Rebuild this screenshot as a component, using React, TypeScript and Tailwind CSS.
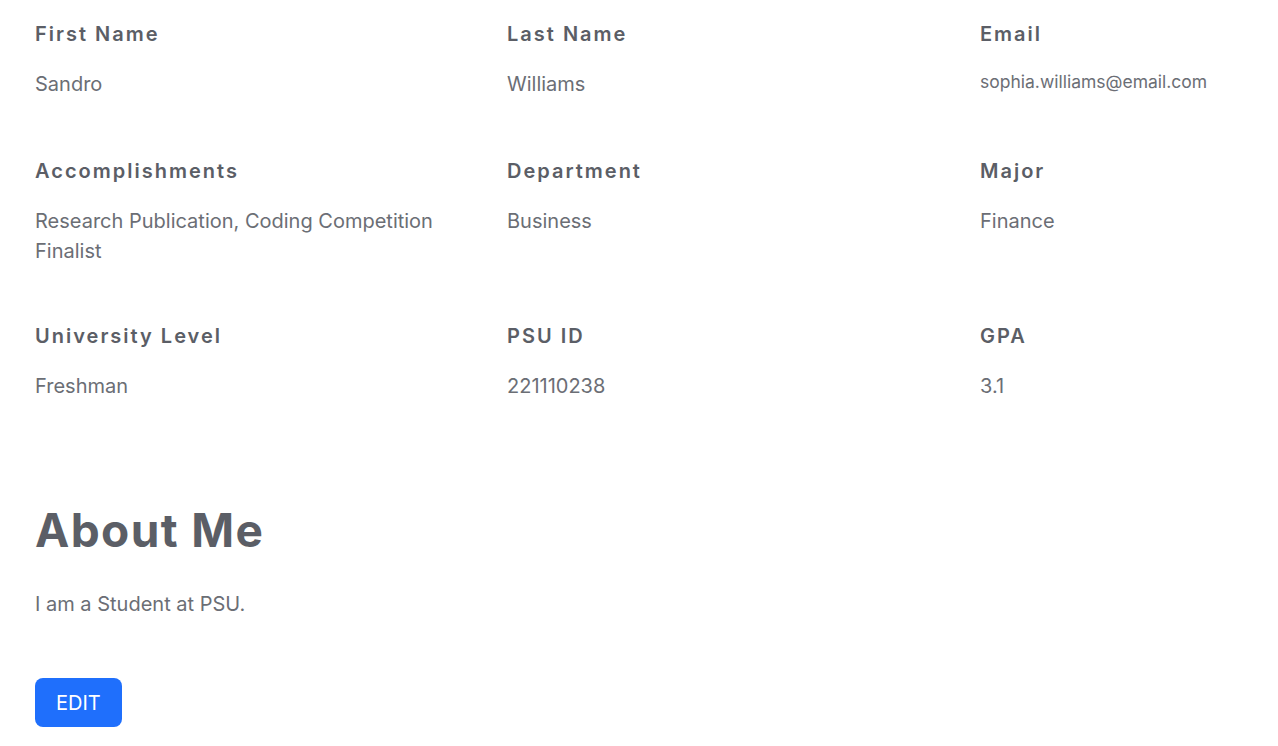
import React from 'react'

const fields = [
  { label: 'First Name', value: 'Sandro' },
  { label: 'Last Name', value: 'Williams' },
  { label: 'Email', value: 'sophia.williams@email.com', small: true },
  { label: 'Accomplishments', value: 'Research Publication, Coding Competition Finalist' },
  { label: 'Department', value: 'Business' },
  { label: 'Major', value: 'Finance' },
  { label: 'University Level', value: 'Freshman' },
  { label: 'PSU ID', value: '221110238' },
  { label: 'GPA', value: '3.1' },
]

export default function App() {
  return (
    <div className="min-h-screen bg-white font-['Inter',sans-serif] text-[#5f6269]">
      <div className="px-[35px] pt-[20px]">
        {/* Profile details */}
        <div className="grid grid-cols-[472px_473px_1fr] gap-y-[56px]">
          {fields.map((f, i) => (
            <div key={i} className={i < 3 ? 'pr-8 pb-[2px]' : 'pr-8'}>
              <div className="text-[20px] leading-[28px] font-semibold tracking-[0.1em] text-[#5b5e66]">
                {f.label}
              </div>
              <div
                className={
                  f.small
                    ? 'mt-[21px] text-[17.5px] leading-[30px] text-[#6b6e75] -translate-y-[2px]'
                    : 'mt-[21px] text-[20px] leading-[30px] text-[#6b6e75]'
                }
              >
                {f.value}
              </div>
            </div>
          ))}
        </div>

        {/* About */}
        <h2 className="mt-[102px] text-[46px] leading-[54px] font-bold tracking-[0.03em] text-[#5b5e66]">
          About Me
        </h2>
        <p className="mt-[32px] text-[20px] leading-[30px] text-[#6b6e75]">I am a Student at PSU.</p>

        <button className="mt-[59px] h-[49px] px-[21px] rounded-lg bg-[#1f6ffc] text-white text-[20px]">
          EDIT
        </button>
      </div>
    </div>
  )
}
